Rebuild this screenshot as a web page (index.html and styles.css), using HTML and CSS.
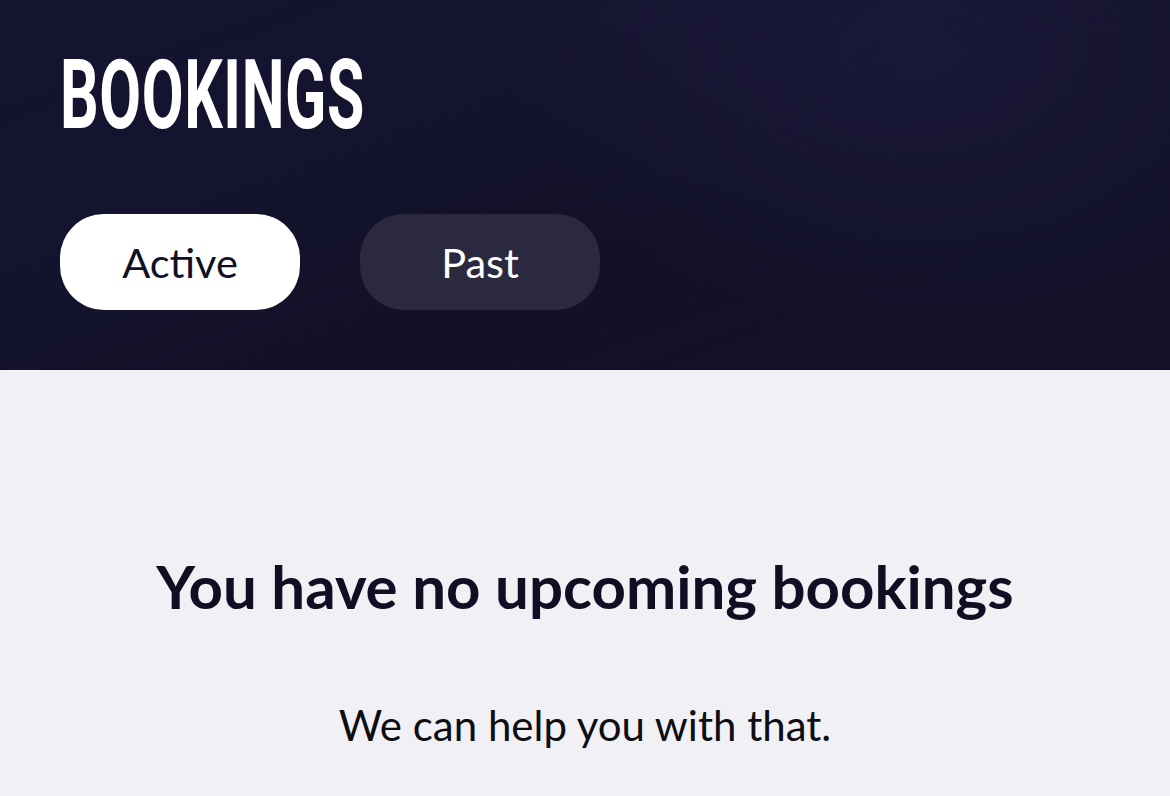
FILE: index.html
```html
<!DOCTYPE html>
<html>
<head>
<meta charset="utf-8">
<link rel="stylesheet" href="styles.css">
</head>
<body>
<header class="hero">
  <h1 class="title"><span class="title-text">BOOKINGS</span></h1>
  <div class="tabs">
    <button class="tab tab-active">Active</button>
    <button class="tab tab-past">Past</button>
  </div>
</header>
<main class="content">
  <h2 class="empty-title">You have no upcoming bookings</h2>
  <p class="empty-text">We can help you with that.</p>
</main>
</body>
</html>
```

FILE: styles.css
```css
html, body {
  margin: 0;
  padding: 0;
}
body {
  width: 1170px;
  height: 796px;
  overflow: hidden;
  background: #f1f0f5;
  font-family: "Lato", "Open Sans", sans-serif;
}
.hero {
  height: 370px;
  box-sizing: border-box;
  padding: 0 60px;
  background: linear-gradient(160deg, #141330 0%, #15142f 30%, #121127 60%, #131229 100%);
  position: relative;
  overflow: hidden;
}
.hero::after {
  content: "";
  position: absolute;
  right: -200px;
  top: -250px;
  width: 900px;
  height: 600px;
  background: radial-gradient(ellipse at center, rgba(32,29,70,0.55) 0%, rgba(32,29,70,0) 65%);
  pointer-events: none;
}
.title {
  margin: 0;
  padding-top: 40px;
  height: 110px;
  font-family: "Roboto", sans-serif;
  font-weight: 700;
  font-size: 97px;
  line-height: 110px;
  color: #ffffff;
  position: relative;
  z-index: 1;
}
.title-text {
  display: inline-block;
  transform: scaleX(0.625);
  transform-origin: left center;
  letter-spacing: 1px;
}
.tabs {
  display: flex;
  gap: 60px;
  margin-top: 64px;
  position: relative;
  z-index: 1;
}
.tab {
  width: 240px;
  height: 96px;
  border: none;
  border-radius: 44px;
  font-family: "Lato", sans-serif;
  font-size: 41.5px;
  font-weight: 400;
  padding: 0;
  cursor: pointer;
}
.tab-active {
  background: #ffffff;
  color: #100f24;
}
.tab-past {
  background: #2a2940;
  color: #ffffff;
}
.content {
  text-align: center;
  padding-top: 180px;
}
.empty-title {
  margin: 0;
  font-family: "Lato", sans-serif;
  font-weight: 700;
  font-size: 60px;
  line-height: 72px;
  color: #0f0e22;
}
.empty-text {
  margin: 78px 0 0;
  font-family: "Lato", sans-serif;
  font-weight: 400;
  font-size: 42px;
  line-height: 50px;
  color: #0d0d12;
}
```
